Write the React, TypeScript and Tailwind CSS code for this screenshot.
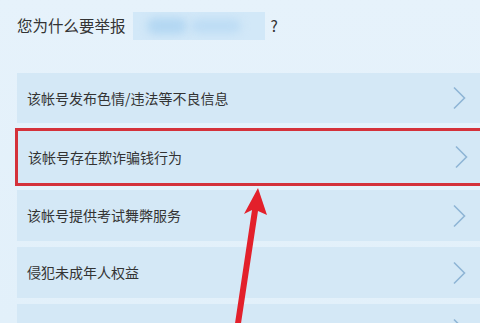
const reasons = [
  "该帐号发布色情/违法等不良信息",
  "该帐号存在欺诈骗钱行为",
  "该帐号提供考试舞弊服务",
  "侵犯未成年人权益",
  "",
];

function Chevron() {
  return (
    <svg width="14" height="24" viewBox="0 0 14 24" fill="none" className="shrink-0">
      <path d="M2 1.5 L12.5 12 L2 22.5" stroke="#8fb5d5" strokeWidth="1.6" />
    </svg>
  );
}

function Row({ text }: { text: string }) {
  return (
    <div className="flex h-full items-center justify-between bg-[#d4e8f6] pl-[10px] pr-[14px] text-[14px] text-[#333]">
      <span>{text}</span>
      <Chevron />
    </div>
  );
}

export default function App() {
  return (
    <div
      className="relative h-[323px] w-[480px] overflow-hidden bg-gradient-to-b from-[#e6f2fb] to-[#e2f0fa]"
      style={{ fontFamily: '"Noto Sans CJK SC", "Microsoft YaHei", sans-serif' }}
    >
      <div className="flex h-[28px] items-center pl-[17px] pt-0 mt-[12px] text-[15.5px] text-[#333]">
        <span>您为什么要举报</span>
        <div className="relative ml-[7px] h-[28px] w-[132px] overflow-hidden bg-[#d2e8f8]">
          <div className="absolute left-[14px] top-[6px] h-[16px] w-[40px] rounded-full bg-[#b3d7f2] blur-[4px]" />
          <div className="absolute left-[58px] top-[7px] h-[14px] w-[50px] rounded-full bg-[#bddcf4] blur-[4px]" />
        </div>
        <span className="ml-[6px]">?</span>
      </div>

      <div className="mt-[33px] flex flex-col">
        <div className="ml-[17px] h-[50px]">
          <Row text={reasons[0]} />
        </div>
        <div className="ml-[15px] mt-[5px] h-[58px] w-[470px] border-[3px] border-[#d4313a]">
          <Row text={reasons[1]} />
        </div>
        <div className="ml-[17px] mt-[4px] h-[51px]">
          <Row text={reasons[2]} />
        </div>
        <div className="ml-[17px] mt-[6px] h-[51px]">
          <Row text={reasons[3]} />
        </div>
        <div className="ml-[17px] mt-[6px] h-[51px]">
          <Row text={reasons[4]} />
        </div>
      </div>

      <svg className="pointer-events-none absolute left-0 top-0" width="480" height="323" viewBox="0 0 480 323">
        <path d="M258 188 L267 215 L258 211 L240 330 L234 330 L252 210 L244 214 Z" fill="#e3202b" />
      </svg>
    </div>
  );
}
